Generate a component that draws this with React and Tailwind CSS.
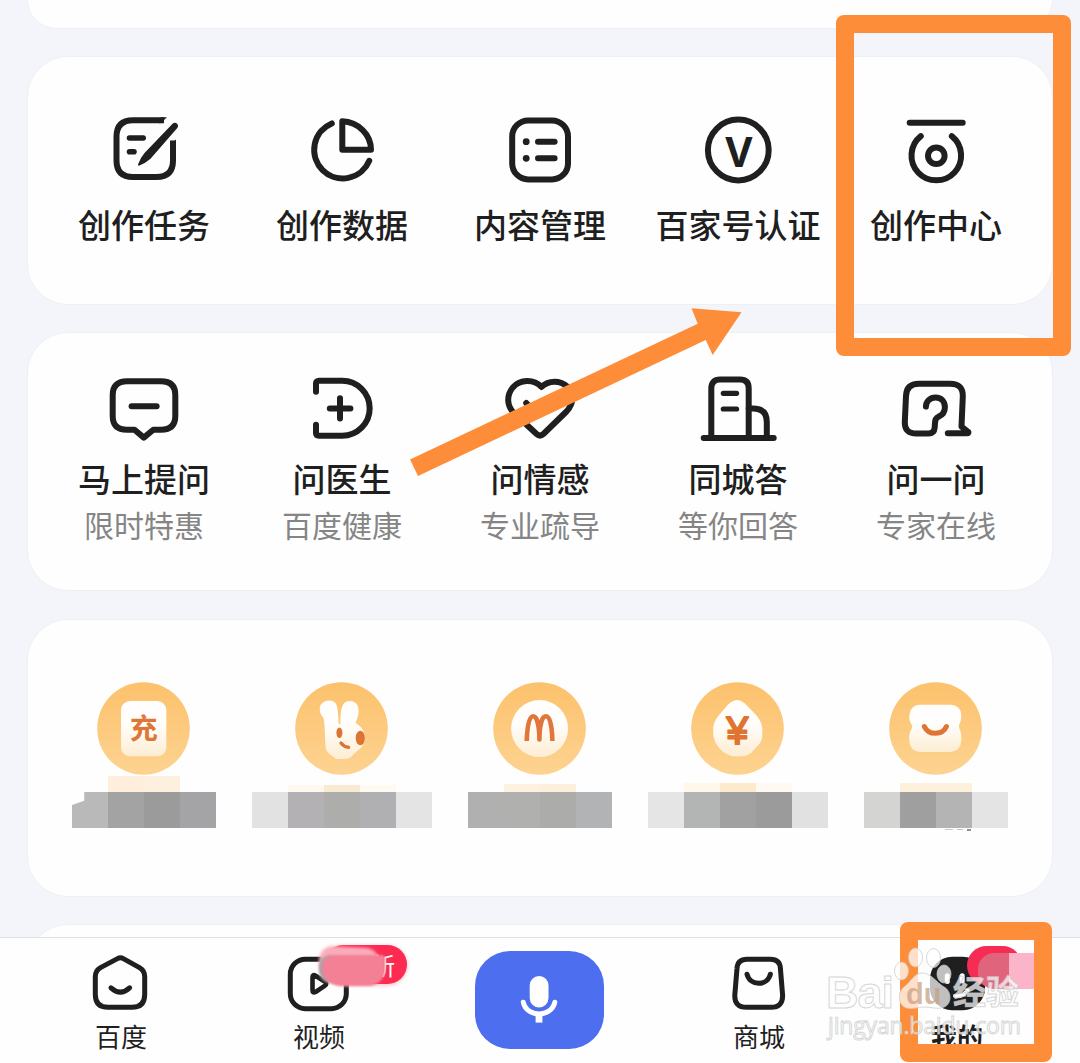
import clsx from 'clsx';

const Icon = ({ children, w = 6 }) => (
  <svg
    viewBox="0 0 80 80"
    className="h-20 w-20 shrink-0"
    fill="none"
    stroke="#1f1f1f"
    strokeWidth={w}
    strokeLinecap="round"
    strokeLinejoin="round"
  >
    {children}
  </svg>
);

const TaskIcon = () => (
  <Icon>
    <path
      strokeLinecap="butt"
      d="M60 10.3 H29 Q12.5 10.3 12.5 26.8 V50.5 Q12.5 67 29 67 H52.5 Q69 67 69 50.5 V30.5"
    />
    <path d="M57 7.3 H63 L56.5 13.3 H55 Z M66 34.5 L72 29.5 V36 H66 Z" fill="#1f1f1f" stroke="none" />
    <path d="M68.8 13.6 Q71 11.8 73.2 13.8 Q75 15.8 73.3 18 L46.5 48.8 Q42 53 34.8 55.8 Q33.6 55.6 34 54.6 Q36.5 47.5 40.5 43 Z" fill="#1f1f1f" stroke="none" />
    <path d="M25.5 28 H39.2 M25.5 41.8 H30" strokeWidth="5.6" />
  </Icon>
);

const DataIcon = () => (
  <Icon>
    <path d="M29.8 13.4 A28.6 28.6 0 1 0 67.2 50.8" />
    <path d="M40.3 39.8 V11.2 A30 28.6 0 0 1 69 39.8 Z" />
  </Icon>
);

const ContentIcon = () => (
  <Icon>
    <rect x="12.2" y="10.4" width="55.8" height="59" rx="16" />
    <circle cx="26.2" cy="31.7" r="3.4" fill="#1f1f1f" stroke="none" />
    <circle cx="26.2" cy="48.3" r="3.4" fill="#1f1f1f" stroke="none" />
    <path d="M38 31.7 H54.6 M38 48.3 H54.6" />
  </Icon>
);

const VerifyIcon = () => (
  <Icon>
    <circle cx="40.3" cy="40" r="30.4" />
    <text
      x="40.8"
      y="56.6"
      textAnchor="middle"
      fontSize="42"
      fontWeight="700"
      fill="#1f1f1f"
      stroke="none"
      className="font-['Open_Sans',sans-serif]"
    >
      V
    </text>
  </Icon>
);

const CenterIcon = () => (
  <Icon>
    <path d="M13.7 12.7 H66.7" />
    <path d="M24.8 26.2 A24.8 24.8 0 1 0 55.8 26.2" />
    <circle cx="40.3" cy="45.7" r="8.3" />
  </Icon>
);

const AskIcon = () => (
  <Icon>
    <path d="M23 11.3 H57 Q71.3 11.3 71.3 25 V46 Q71.3 59.7 57 59.7 H49.3 L39.8 67.6 L30.5 59.7 H23 Q8.7 59.7 8.7 46 V25 Q8.7 11.3 23 11.3 Z" />
    <path d="M27.6 36.3 H52.6" />
  </Icon>
);

const DoctorIcon = () => (
  <Icon>
    <path d="M14 21.8 V13.5 Q14 10.7 17 10.7 H40.2 A27.5 27.5 0 0 1 40.2 65.7 H17 Q14 65.7 14 63 V54.8" />
    <path d="M38 28.3 V48.6 M27.8 38.6 H48.4" />
  </Icon>
);

const HeartIcon = () => (
  <Icon>
    <path d="M41.5 17 C34 8.8 20 9 12.8 17.5 C6 26 7 36 14 43 L36.6 64 Q40 67 43.4 64 L66.5 41.5 C74 33.5 74 23.5 67.5 16.8 C60 9.8 48.5 10 41.5 17 Z" />
    <path d="M26.2 33 Q40 50 54 33" />
  </Icon>
);

const CityIcon = () => (
  <Icon>
    <path d="M5.7 68 H75.7" />
    <path d="M13.3 68 V18.3 Q13.3 9.6 22 9.6 H42 Q50.7 9.6 50.7 18.3 V68" />
    <path d="M50.7 38.6 H55 Q68.8 38.6 68.8 52 V68" />
    <path d="M25.3 23.3 H38.6 M25.3 39 H38.6" strokeWidth="5.2" />
  </Icon>
);

const ExpertIcon = () => (
  <Icon>
    <path d="M29.9 36.6 C30 31.4 34 27.5 39.6 27.5 C45.4 27.5 48.9 31.6 48.9 37.3 C48.9 42.2 46.6 45 42.6 46.6 C39.6 48 39 49.8 39 53 L38.7 57.5 Q38.2 63.6 32.4 63.6 H20.5 Q8.4 63.6 8.8 52 L10 26 Q10.4 13.7 23 13.7 H54 Q67.2 13.7 66.8 26.5 L65.5 56.6 L72.4 62 Q72.9 63.3 71 63.3 H51.8" />
  </Icon>
);

const creation = [
  { label: '创作任务', icon: <TaskIcon /> },
  { label: '创作数据', icon: <DataIcon /> },
  { label: '内容管理', icon: <ContentIcon /> },
  { label: '百家号认证', icon: <VerifyIcon /> },
  { label: '创作中心', icon: <CenterIcon /> },
];

const consult = [
  { label: '马上提问', sub: '限时特惠', icon: <AskIcon /> },
  { label: '问医生', sub: '百度健康', icon: <DoctorIcon /> },
  { label: '问情感', sub: '专业疏导', icon: <HeartIcon /> },
  { label: '同城答', sub: '等你回答', icon: <CityIcon /> },
  { label: '问一问', sub: '专家在线', icon: <ExpertIcon /> },
];

const Coin = ({ children }) => (
  <svg viewBox="0 0 93 93" className="h-[93px] w-[93px] shrink-0 -translate-x-px">
    <circle cx="46.5" cy="46.5" r="46.3" fill="url(#coin)" />
    {children}
  </svg>
);

const RechargeCoin = () => (
  <Coin>
    <rect x="24" y="19" width="45.3" height="55.3" rx="9" fill="url(#cream)" />
    <text
      x="46.8"
      y="57.2"
      textAnchor="middle"
      fontSize="28"
      fontWeight="700"
      fill="#df7636"
    >
      充
    </text>
  </Coin>
);

const RabbitCoin = () => (
  <Coin>
    <path
      d="M28.5 36 C24 31 24 25 26 22.5 C29 18 37 17 40.5 21 C43 24 43 33 43.8 42 L45.6 42 C45 34 46 26 48.5 22 C51 18 59 17.5 62 22.5 C65 28 63.5 34 60.5 41 C66 44 70 49 70 56 C70 61 67 66 62 69 C58 72 56 77 50 77 H41 C38 74 31.5 71 31 67 C29.5 58 30.5 46 28.5 36 Z"
      fill="url(#cream)"
    />
    <ellipse cx="44.4" cy="50.7" rx="3" ry="5.2" fill="#dd7434" />
    <ellipse cx="65.3" cy="56" rx="4.6" ry="7.3" fill="#dd7434" />
    <path d="M46 61 Q49 65 53.5 65.3" stroke="#dd7434" strokeWidth="3.4" strokeLinecap="round" fill="none" />
  </Coin>
);

const BurgerCoin = () => (
  <Coin>
    <circle cx="46.6" cy="46.6" r="28.5" fill="url(#cream)" />
    <path
      d="M33.7 59 C34.3 43 36.3 34.3 40 34.3 C44 34.3 46.4 44 46.4 57.5 C46.4 44 48.8 34.3 53 34.3 C56.8 34.3 59 43 59.4 59"
      stroke="#e2763a"
      strokeWidth="4.6"
      strokeLinejoin="round"
      fill="none"
    />
  </Coin>
);

const CashCoin = () => (
  <Coin>
    <path
      d="M46.3 18 Q50 18 54.5 22 L66 34 Q71.3 41 71.3 48 V54 Q71 60 66 64.5 L60 71 Q56 74.6 46.3 74.6 Q37 74.6 30 68 Q22 60 22.2 51 V46 Q22.5 41 26.5 35 L37 22.5 Q42 18 46.3 18 Z"
      fill="url(#cream)"
    />
    <text
      x="46.4"
      y="62.2"
      textAnchor="middle"
      fontSize="39"
      fill="#e0732f"
      stroke="#e0732f"
      strokeWidth="2"
      strokeLinejoin="round"
      className="font-['Liberation_Sans',sans-serif]"
    >
      ¥
    </text>
  </Coin>
);

const ToastCoin = () => (
  <Coin>
    <path
      d="M30 22.8 H62 Q72.3 24 72.3 33.5 Q72.3 38 70.8 41 Q69 44.5 71 48 Q72.3 51 72.3 58 Q72 69 61 70 H31 Q20.5 69 20.2 58 Q20 51 22 48 Q24.5 44.5 21.6 41 Q20 38 20.3 33.5 Q21 24 30 22.8 Z"
      fill="url(#cream)"
    />
    <path d="M35.4 44.6 Q38.5 51.3 46.5 51.3 Q54.5 51.3 57.4 44.6" stroke="#df7434" strokeWidth="5" strokeLinecap="round" fill="none" />
  </Coin>
);

const wallet = [
  {
    coin: <RechargeCoin />,
    glow: ['h-4 bg-[#feeedb]', 'h-4 bg-[#fef0df]'],
    blocks: [
      'bg-[#bab9b9] [clip-path:polygon(0_36%,34%_24%,34%_0,100%_0,100%_100%,0_100%)]',
      'bg-[#a4a3a4]',
      'bg-[#9c9b9c]',
      'bg-[#a4a4a6]',
    ],
  },
  {
    coin: <RabbitCoin />,
    glow: ['h-[7px] bg-[#fef8ee]', 'h-[7px] bg-[#f8ebd2]', 'h-[7px] bg-[#fefaf2]'],
    blocks: ['bg-[#e2e2e2]', 'bg-[#b3b1b3]', 'bg-[#adadac]', 'bg-[#b0afb1]', 'bg-[#e5e4e4]'],
  },
  {
    coin: <BurgerCoin />,
    glow: ['h-2 bg-[#fdf1df]', 'h-2 bg-[#fcefdb]'],
    blocks: ['bg-[#b0b0b0]', 'bg-[#b0b0ae]', 'bg-[#acacaa]', 'bg-[#b2b3b5]'],
  },
  {
    coin: <CashCoin />,
    glow: ['h-[9px] bg-[#fef7ea]', 'h-[9px] bg-[#fdeacc]', 'h-[9px] bg-[#fefaf3]'],
    blocks: ['bg-[#e5e5e5]', 'bg-[#b3b5b4]', 'bg-[#a1a1a2]', 'bg-[#9b9b9b]', 'bg-[#e1e1e1]'],
  },
  {
    coin: <ToastCoin />,
    glow: ['h-[9px] bg-[#fdf0dc]', 'h-[9px] bg-[#fdf0dc]'],
    blocks: ['bg-[#d4d4d3]', 'bg-[#a09f9f]', 'bg-[#b5b4b4]', 'bg-[#e5e4e4]'],
    scraps: true,
  },
];

const Card = ({ className, children }) => (
  <section
    className={clsx(
      'mx-7 grid shrink-0 grid-cols-5 content-start rounded-[40px] bg-[#fefefe] px-[17px] shadow-[0_0_0_1px_#eff0f4]',
      className,
    )}
  >
    {children}
  </section>
);

const Entry = ({ icon, label, sub }) => (
  <div className="flex flex-col items-center whitespace-nowrap">
    {icon}
    <span className={clsx('text-[33px] font-medium leading-[48px] text-[#1f1f1f]', sub ? 'mt-1' : 'mt-2.5')}>{label}</span>
    {sub && <span className="text-[30px] leading-[44px] text-[#858585]">{sub}</span>}
  </div>
);

const NavIcon = ({ children }) => (
  <svg
    viewBox="0 0 70 70"
    className="h-[70px] w-[70px]"
    fill="none"
    stroke="#1f1f1f"
    strokeWidth="5"
    strokeLinecap="round"
    strokeLinejoin="round"
  >
    {children}
  </svg>
);

const NavItem = ({ label, bold, children }) => (
  <div className="relative flex flex-col items-center pt-3">
    {children}
    <span className={clsx('text-[26px] leading-8 text-[#1f1f1f]', bold && 'font-bold')}>{label}</span>
  </div>
);

const BottomNav = () => (
  <nav className="grid h-[126px] shrink-0 grid-cols-[198px_198px_242px_198px_198px] border-t border-[#dfe0e4] bg-[#fefefe] pl-[22px]">
    <NavItem label="百度">
      <NavIcon>
        <path d="M31.5 8.6 Q34.4 7 37.3 8.6 L53.5 17.6 Q58.7 20.8 58.7 26.5 V44.5 Q58.7 57.3 46 57.3 H22 Q9.3 57.3 9.3 44.5 V26.5 Q9.3 20.8 14.5 17.6 Z" />
        <path d="M25 37.8 Q34.3 46.4 43.6 37.8" />
      </NavIcon>
    </NavItem>
    <NavItem label="视频">
      <NavIcon>
        <rect x="6.3" y="9.2" width="56" height="49.5" rx="15" />
        <path d="M28.5 27.5 Q28.5 24 31.6 25.7 L41 31.8 Q43.5 33.8 41 35.7 L31.6 42 Q28.5 43.6 28.5 40.2 Z" strokeWidth="4.6" />
      </NavIcon>
      <div className="absolute left-[104px] top-[7px] flex h-[39px] w-[83px] items-center justify-end overflow-hidden rounded-full bg-[#fb2b52] pr-3 text-2xl text-white shadow-[0_1px_4px_#fbb6c2]">
        新
      </div>
      <div className="absolute left-[99px] top-[9px] h-8 w-[60px] rotate-3 rounded-[14px] bg-[#fbacba] blur-[1.5px]" />
      <div className="absolute left-[99px] top-[17px] h-7 w-3 rounded-l-xl bg-[#a9a2a5] blur-[1px]" />
      <div className="absolute left-[102px] top-[17px] h-[31px] w-[63px] rounded-[14px_4px_18px_20px] bg-[#f48095] blur-[1px]" />
    </NavItem>
    <div className="flex justify-center pt-[13px]">
      <button type="button" className="h-[98px] w-[129px] rounded-[35px] bg-[#4e6ef0]">
        <svg viewBox="0 0 129 98" className="h-full w-full" fill="none" stroke="#fff" strokeWidth="5" strokeLinecap="round">
          <rect x="54.7" y="25" width="18.8" height="31.4" rx="9.4" fill="#fff" stroke="none" />
          <path d="M48.3 51.3 C51.5 66.8 76.5 66.8 79.8 51.3" />
          <path d="M64 63 V71.6" strokeWidth="6.8" strokeLinecap="butt" />
        </svg>
      </button>
    </div>
    <NavItem label="商城">
      <NavIcon>
        <path d="M23 9.2 H46.5 Q56 9.2 56.4 18.5 L58.6 45 Q59 57.3 47 57.3 H22.5 Q10.3 57.3 10.8 45 L13 18.5 Q13.5 9.2 23 9.2 Z" />
        <path d="M23 24.2 C26 36.4 43.4 36.4 46.4 24.2" />
      </NavIcon>
    </NavItem>
    <NavItem label="我的" bold>
      <NavIcon>
        <rect x="8" y="6.8" width="55" height="53.4" rx="22" fill="#1f1f1f" stroke="none" />
        <path d="M25.3 25.8 V31.6 M40.2 25.8 V31" stroke="#fff" />
        <path d="M33 46 Q40 47.5 45.5 40.5" stroke="#fff" strokeWidth="4" />
      </NavIcon>
      <div className="absolute left-[109px] top-2 h-[39px] w-[55px] rounded-[20px_20px_6px_20px] bg-[#f62c55]" />
      <div className="absolute left-[120px] top-[15px] flex h-9 w-14 overflow-hidden rounded-l-2xl">
        <div className="w-[31px] bg-[#e0647c]" />
        <div className="flex-1 bg-[#fcb5c8]" />
      </div>
    </NavItem>
  </nav>
);

const Watermark = () => (
  <svg viewBox="0 0 220 110" className="absolute left-[820px] top-[940px] h-[110px] w-[220px]">
    <g
      fill="#fff"
      fillOpacity="0.72"
      stroke="#c9c9c9"
      strokeOpacity="0.75"
      strokeWidth="1"
    >
      <text x="6" y="68" fontSize="45" fontWeight="700" textLength="68" className="font-['Liberation_Sans',sans-serif]">Bai</text>
      <ellipse cx="81.5" cy="31" rx="7" ry="9" />
      <ellipse cx="95.5" cy="17.5" rx="7" ry="9.5" />
      <ellipse cx="113.5" cy="18" rx="7" ry="9.5" />
      <ellipse cx="124" cy="34" rx="7" ry="9" />
      <path d="M102 33 C94 33 91 42 84 47 C77 52 77 68 90 68.5 C97 68.5 99 67 105 67 C111 67 115 69 121 68 C133 66 132 51 124 47 C116 42 111 33 102 33 Z" />
      <text x="133" y="64" fontSize="33" fontWeight="700">经验</text>
      <text x="8" y="94" fontSize="23" textLength="193" className="font-['Open_Sans',sans-serif]">jingyan.baidu.com</text>
    </g>
    <text x="86" y="64" fontSize="29" fontWeight="700" fill="#c99f83" fillOpacity="0.75" className="font-['Liberation_Sans',sans-serif]">du</text>
  </svg>
);

// orange hints drawn on top of the page
const Annotations = () => (
  <>
    <div className="absolute left-[836px] top-[15px] h-[341px] w-[235px] rounded-lg border-[18px] border-[#fe8d3a]" />
    <svg viewBox="0 0 1080 1063" className="absolute left-0 top-0 h-full w-full">
      <path
        d="M410 459.5 L697.7 323.8 L691.5 308.3 L741.5 312.3 L712.7 355 L705.7 340 L418 476 Z"
        fill="#fe8d3a"
      />
    </svg>
    <div className="absolute left-[900px] top-[922px] h-[140px] w-[152px] rounded-lg border-[18px] border-[#fe8d3a]" />
  </>
);

const App = () => (
  <div className="relative flex h-[1063px] w-[1080px] flex-col overflow-hidden bg-[#f4f5fa] font-['Noto_Sans_CJK_SC',sans-serif]">
    <svg className="absolute h-0 w-0">
      <defs>
        <linearGradient id="coin" x1="0" y1="0" x2="0" y2="1">
          <stop offset="0" stopColor="#fcc16c" />
          <stop offset="1" stopColor="#fdd391" />
        </linearGradient>
        <linearGradient id="cream" x1="0" y1="0" x2="0" y2="1">
          <stop offset="0.4" stopColor="#fffefc" />
          <stop offset="1" stopColor="#fdedd3" />
        </linearGradient>
      </defs>
    </svg>

    <main className="flex h-[937px] shrink-0 flex-col gap-[29px] overflow-hidden">
      <Card className="h-7 rounded-t-none" />
      <Card className="h-[247px] pt-[53px]">
        {creation.map((item) => <Entry key={item.label} {...item} />)}
      </Card>
      <Card className="h-[257px] pt-[37px]">
        {consult.map((item) => <Entry key={item.label} {...item} />)}
      </Card>
      <Card className="mt-px h-[276px] pt-[62px]">
        {wallet.map(({ coin, glow, blocks, scraps }, i) => (
          <div key={i} className="flex flex-col items-center">
            {coin}
            <div className="flex h-[17px] items-end">
              {glow.map((g, j) => <div key={j} className={clsx('w-9', g)} />)}
            </div>
            <div className="flex">
              {blocks.map((b, j) => <div key={j} className={clsx('h-9 w-9', b)} />)}
            </div>
            {scraps && (
              <div className="ml-11 mt-px flex gap-1">
                <div className="h-px w-2 bg-[#c9c9c9]" />
                <div className="h-px w-1.5 bg-[#c0c0c0]" />
                <div className="h-0.5 w-1 bg-[#8f8f8f]" />
              </div>
            )}
          </div>
        ))}
      </Card>
      <Card className="h-20" />
    </main>

    <BottomNav />
    <Annotations />
    <Watermark />
  </div>
);

export default App;
